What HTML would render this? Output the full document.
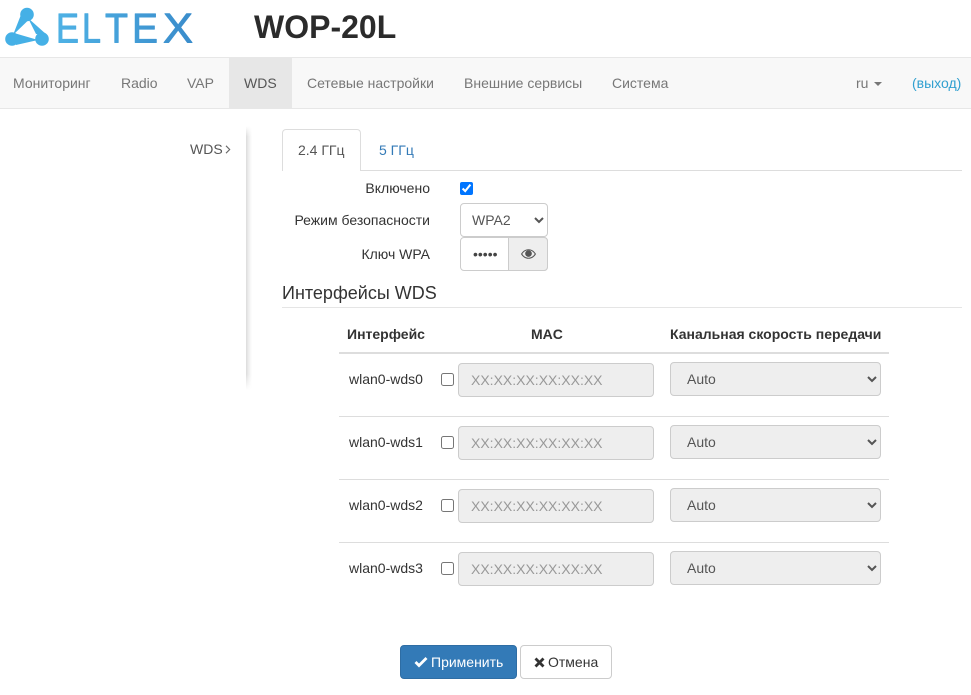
<!DOCTYPE html>
<html lang="ru"><head><meta charset="utf-8"><title>WOP-20L</title>
<style>
html,body{margin:0;padding:0;background:#fff}
body{width:971px;height:695px;position:relative;overflow:hidden;font:14px/20px "Liberation Sans",sans-serif;color:#333}
.a{position:absolute;white-space:nowrap}
.nav{left:0;top:57px;width:971px;height:50px;background:#f8f8f8;border-top:1px solid #e7e7e7;border-bottom:1px solid #e7e7e7}
.n{top:73px;color:#777}
.lbl{left:230px;width:200px;text-align:right;color:#333}
.th{top:324px;font-weight:bold;font-size:14px}
select{font:14px "Liberation Sans",sans-serif;box-sizing:border-box;border:1px solid #ccc;border-radius:4px;color:#555;margin:0}
select:disabled{opacity:1;background:#eee;color:#555}
input[type=checkbox]{margin:0;width:13px;height:13px}
.mac{box-sizing:border-box;left:458px;width:196px;height:34px;background:#eee;border:1px solid #ccc;border-radius:4px;color:#999;padding:6px 12px;line-height:20px}
.sel{left:670px;width:211px;height:34px;padding:0 12px}
.ln{left:339px;width:550px;height:1px;background:#ddd}
</style></head><body>

<svg class="a" style="left:0;top:0" width="200" height="56" viewBox="0 0 200 56">
<defs><linearGradient id="g" x1="52" x2="193" y1="0" y2="0" gradientUnits="userSpaceOnUse"><stop offset="0" stop-color="#4fb3e6"/><stop offset="1" stop-color="#3a8ccb"/></linearGradient></defs>
<g fill="#45b0e6"><circle cx="27" cy="14.500" r="6.800"/><circle cx="12" cy="39" r="6.800"/><circle cx="42" cy="39" r="6.800"/>
<path d="M20.500 16 L27.500 21 L13 35 Z"/>
<path d="M14 33 L16 45 L38 40 Z"/>
<path d="M36 34 L47 35 L28 18 Z"/></g>
<g font-family="Liberation Sans" font-size="42" fill="url(#g)" stroke="url(#g)" stroke-width=".9" stroke-linejoin="round">
<text x="56" y="42.500" textLength="23" lengthAdjust="spacingAndGlyphs">E</text>
<text x="82" y="42.500" textLength="19" lengthAdjust="spacingAndGlyphs">L</text>
<text x="105" y="42.500" textLength="23" lengthAdjust="spacingAndGlyphs">T</text>
<text x="132" y="42.500" textLength="26" lengthAdjust="spacingAndGlyphs">E</text>
<text x="163" y="42.500" textLength="30" lengthAdjust="spacingAndGlyphs">X</text></g>
</svg>

<div class="a" style="left:254px;top:9px;font:bold 32px/36px 'Liberation Sans',sans-serif;color:#2b2b2b">WOP-20L</div>

<div class="a nav"></div>
<div class="a" style="left:229px;top:58px;width:63px;height:50px;background:#e7e7e7"></div>
<div class="a n" style="left:13px">Мониторинг</div>
<div class="a n" style="left:121px">Radio</div>
<div class="a n" style="left:187px">VAP</div>
<div class="a n" style="left:244px;color:#555">WDS</div>
<div class="a n" style="left:307px">Сетевые настройки</div>
<div class="a n" style="left:464px">Внешние сервисы</div>
<div class="a n" style="left:612px">Система</div>
<div class="a n" style="left:856px">ru</div>
<div class="a" style="left:874px;top:82px;width:0;height:0;border-left:4px solid transparent;border-right:4px solid transparent;border-top:4px solid #777"></div>
<div class="a n" style="left:912px;color:#31a0d0">(выход)</div>

<div class="a" style="left:246px;top:126px;width:6px;height:264px;background:linear-gradient(to right,#dcdcdc,#f0f0f0 50%,#fff);-webkit-mask-image:linear-gradient(to bottom,transparent,#000 4%,#000 94%,transparent);mask-image:linear-gradient(to bottom,transparent,#000 4%,#000 94%,transparent)"></div>
<div class="a" style="left:190px;top:139px;color:#555">WDS</div>
<svg class="a" style="left:224px;top:145px" width="8" height="9" viewBox="0 0 8 9"><path d="M2 .8 L5.700 4.500 L2 8.200" fill="none" stroke="#666" stroke-width="1.100"/></svg>

<div class="a" style="left:282px;top:170px;width:680px;height:1px;background:#ddd"></div>
<div class="a" style="box-sizing:border-box;left:282px;top:129px;width:79px;height:42px;background:#fff;border:1px solid #ddd;border-bottom:0;border-radius:4px 4px 0 0"></div>
<div class="a" style="left:298px;top:140px;color:#555">2.4 ГГц</div>
<div class="a" style="left:379px;top:140px;color:#337ab7">5 ГГц</div>

<div class="a lbl" style="top:178px">Включено</div>
<input class="a" type="checkbox" checked style="left:460px;top:182px">
<div class="a lbl" style="top:210px">Режим безопасности</div>
<select class="a" style="left:460px;top:203px;width:88px;height:34px;padding:0 7px;background:#fff"><option>WPA2</option></select>
<div class="a lbl" style="top:244px">Ключ WPA</div>
<div class="a" style="box-sizing:border-box;left:460px;top:237px;width:88px;height:34px;border:1px solid #ccc;border-radius:4px;background:#fff"></div>
<div class="a" style="box-sizing:border-box;left:508px;top:237px;width:40px;height:34px;border:1px solid #ccc;border-radius:0 4px 4px 0;background:#eee"></div>
<div class="a" style="left:473px;top:244px;color:#444;font-size:14px">•••••</div>
<svg class="a" style="left:521px;top:248px" width="15" height="12" viewBox="0 0 15 12"><path fill-rule="evenodd" fill="#555" d="M7.500 1.200C4 1.200 1.400 3.400 0 6c1.400 2.600 4 4.800 7.500 4.800S13.600 8.600 15 6C13.600 3.400 11 1.200 7.500 1.200zM7.500 2.300c2.700 0 4.900 1.500 6.200 3.700C12.400 8.200 10.200 9.700 7.500 9.700S2.600 8.200 1.300 6C2.600 3.800 4.800 2.300 7.500 2.300z"/><circle cx="7.500" cy="5.600" r="3.300" fill="#555"/></svg>

<div class="a" style="left:282px;top:283px;font-size:18px;color:#333">Интерфейсы WDS</div>
<div class="a" style="left:282px;top:307px;width:680px;height:1px;background:#e5e5e5"></div>

<div class="a th" style="left:347px">Интерфейс</div>
<div class="a th" style="left:531px">MAC</div>
<div class="a th" style="left:670px">Канальная скорость передачи</div>
<div class="a ln" style="top:352px;height:2px"></div>
<div class="a ln" style="top:416px"></div>
<div class="a ln" style="top:479px"></div>
<div class="a ln" style="top:542px"></div>

<div class="a" style="left:349px;top:369px">wlan0-wds0</div>
<input class="a" type="checkbox" style="left:441px;top:373px">
<div class="a mac" style="top:363px">XX:XX:XX:XX:XX:XX</div>
<select class="a sel" disabled style="top:362px"><option>Auto</option></select>

<div class="a" style="left:349px;top:432px">wlan0-wds1</div>
<input class="a" type="checkbox" style="left:441px;top:436px">
<div class="a mac" style="top:426px">XX:XX:XX:XX:XX:XX</div>
<select class="a sel" disabled style="top:425px"><option>Auto</option></select>

<div class="a" style="left:349px;top:495px">wlan0-wds2</div>
<input class="a" type="checkbox" style="left:441px;top:499px">
<div class="a mac" style="top:489px">XX:XX:XX:XX:XX:XX</div>
<select class="a sel" disabled style="top:488px"><option>Auto</option></select>

<div class="a" style="left:349px;top:558px">wlan0-wds3</div>
<input class="a" type="checkbox" style="left:441px;top:562px">
<div class="a mac" style="top:552px">XX:XX:XX:XX:XX:XX</div>
<select class="a sel" disabled style="top:551px"><option>Auto</option></select>

<div class="a" style="box-sizing:border-box;left:400px;top:645px;width:117px;height:34px;background:#337ab7;border:1px solid #2e6da4;border-radius:4px"></div>
<svg class="a" style="left:414px;top:656px" width="14" height="12" viewBox="0 0 14 12"><path d="M1.500 6 L5 9.500 L12.500 2" fill="none" stroke="#fff" stroke-width="2.800"/></svg>
<div class="a" style="left:431px;top:652px;color:#fff">Применить</div>
<div class="a" style="box-sizing:border-box;left:520px;top:645px;width:92px;height:34px;background:#fff;border:1px solid #ccc;border-radius:4px"></div>
<svg class="a" style="left:534px;top:657px" width="11" height="11" viewBox="0 0 11 11"><path d="M1.500 1.500 L9.500 9.500 M9.500 1.500 L1.500 9.500" fill="none" stroke="#333" stroke-width="2.800"/></svg>
<div class="a" style="left:548px;top:652px;color:#333">Отмена</div>

</body></html>
